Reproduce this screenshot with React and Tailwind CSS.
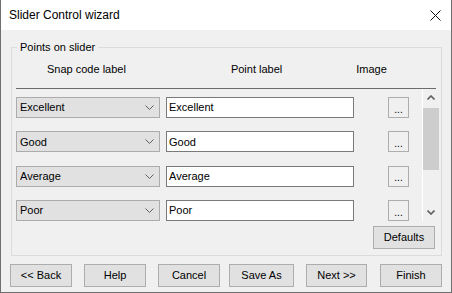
import React from "react";

const rows = ["Excellent", "Good", "Average", "Poor"];

const Chevron = () => (
  <svg width="9" height="5" viewBox="0 0 9 5" className="shrink-0">
    <polyline points="0.5,0.5 4.5,4.5 8.5,0.5" fill="none" stroke="#606060" strokeWidth="1" />
  </svg>
);

const PointRow = ({ label }) => (
  <div className="flex items-center h-[21px]">
    {/* snap code combo */}
    <div className="w-[144px] h-[21px] border border-[#acacac] bg-[#e1e1e1] flex items-center justify-between pl-[3px] pr-[5px]">
      <span>{label}</span>
      <Chevron />
    </div>
    {/* point label text box */}
    <div className="ml-[6px] w-[188px] h-[21px] border border-[#7a7a7a] bg-white flex items-center pl-[2px]">
      {label}
    </div>
    {/* image picker */}
    <div className="ml-[34px] w-[21px] h-[21px] border border-[#adadad] bg-[#f0f0f0] flex items-center justify-center text-[10px] leading-none pt-[4px]">
      ...
    </div>
  </div>
);

const Button = ({ children, w = "w-[62px]", className = "" }) => (
  <div className={`${w} h-[23px] border border-[#adadad] bg-[#e1e1e1] flex items-center justify-center ${className}`}>
    {children}
  </div>
);

export default function App() {
  return (
    <div
      className="w-[452px] h-[293px] bg-[#f0f0f0] border-x border-b border-[#6f6f6f] flex flex-col text-[11px] text-black overflow-hidden"
      style={{ fontFamily: '"Liberation Sans", Arial, sans-serif' }}
    >
      {/* Title bar */}
      <div className="h-[30px] shrink-0 bg-white flex items-center justify-between pl-[8px] pr-[10px]">
        <span className="text-[12px]">Slider Control wizard</span>
        <svg width="11" height="11" viewBox="0 0 11 11">
          <path d="M0.5 0.5 L10.5 10.5 M10.5 0.5 L0.5 10.5" stroke="#111" strokeWidth="1" fill="none" />
        </svg>
      </div>

      {/* Group box */}
      <div className="mt-[17px] ml-[10px] w-[431px] border border-[#dcdcdc] flex flex-col">
        <div className="-mt-[8px] ml-[5px] px-[3px] w-fit bg-[#f0f0f0] leading-[14px]">
          Points on slider
        </div>

        {/* column headers */}
        <div className="h-[34px] pt-[8px] pl-[4px] flex leading-[14px]">
          <span className="ml-[31px]">Snap code label</span>
          <span className="ml-[105px]">Point label</span>
          <span className="ml-[74px]">Image</span>
        </div>
        <div className="ml-[4px] w-[420px] h-px bg-[#6b6b6b]" />

        {/* rows + scrollbar */}
        <div className="flex h-[132px] pl-[4px]">
          <div className="w-[406px] pt-[8px] flex flex-col gap-[13.4px]">
            {rows.map((r) => (
              <PointRow key={r} label={r} />
            ))}
          </div>
          <div className="w-[17px] border-l border-white flex flex-col">
            <div className="h-[17px] flex items-center justify-center">
              <svg width="8" height="5" viewBox="0 0 8 5">
                <polyline points="0.5,4.5 4,1 7.5,4.5" fill="none" stroke="#606060" strokeWidth="1.6" />
              </svg>
            </div>
            <div className="flex-1 pt-[2px]">
              <div className="h-[62px] bg-[#cdcdcd]" />
            </div>
            <div className="h-[17px] flex items-center justify-center">
              <svg width="8" height="5" viewBox="0 0 8 5">
                <polyline points="0.5,0.5 4,4 7.5,0.5" fill="none" stroke="#606060" strokeWidth="1.6" />
              </svg>
            </div>
          </div>
        </div>

        <div className="flex justify-end pr-[6px] pt-[5px] pb-[6px]">
          <Button className="h-[22px]">Defaults</Button>
        </div>
      </div>

      {/* bottom buttons */}
      <div className="mt-[8px] ml-[9px] flex">
        <Button>&lt;&lt; Back</Button>
        <Button className="ml-[12px]">Help</Button>
        <Button className="ml-[12px]">Cancel</Button>
        <Button w="w-[65px]" className="ml-[9px]">Save As</Button>
        <Button w="w-[61px]" className="ml-[12px]">Next &gt;&gt;</Button>
        <Button className="ml-[13px]">Finish</Button>
      </div>
    </div>
  );
}
